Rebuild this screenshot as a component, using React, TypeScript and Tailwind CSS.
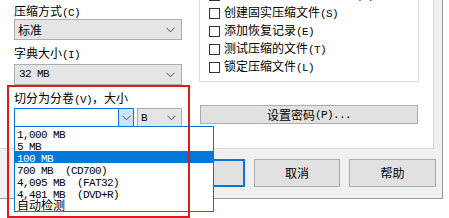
import React from 'react';

const cjk = "font-['Noto_Sans_CJK_SC','Noto_Sans',sans-serif]";

// half-width latin text, SimSun-like 6px advance
function L({ children }: { children: React.ReactNode }) {
  return (
    <span className="font-['Liberation_Mono',monospace] text-[11px] tracking-[-0.6px] whitespace-pre">
      {children}
    </span>
  );
}

function Chevron() {
  return (
    <svg width="9" height="6" viewBox="0 0 9 6" className="shrink-0">
      <polyline points="0.5,0.8 4.5,4.8 8.5,0.8" fill="none" stroke="#4d4d4d" strokeWidth="1" />
    </svg>
  );
}

function Checkbox({ label, mnemonic }: { label: string; mnemonic: string }) {
  return (
    <div className="flex h-[18px] items-center pl-[9px]">
      <div className="h-[11px] w-[11px] border border-[#333] bg-white" />
      <span className="ml-[4px] leading-[14px] whitespace-nowrap">
        {label}
        <L>({mnemonic})</L>
      </span>
    </div>
  );
}

const sizes: { text: string; cn?: boolean }[] = [
  { text: '1,000 MB' },
  { text: '5 MB' },
  { text: '100 MB' },
  { text: '700 MB  (CD700)' },
  { text: '4,095 MB  (FAT32)' },
  { text: '4,481 MB  (DVD+R)' },
  { text: '自动检测', cn: true },
];

export default function App() {
  return (
    <div className={`relative h-[218px] w-[449px] overflow-hidden bg-white text-[12px] text-black ${cjk}`}>
      {/* Dialog */}
      <div className="h-[199px] w-[443px] border-r border-b border-[#9a9a9a] bg-[#f0f0f0]">
        {/* Tab page */}
        <div className="flex h-[149px] w-[434px] border-r border-b border-[#d9d9d9] bg-white pl-[14px]">
          {/* Left column */}
          <div className="flex w-[168px] flex-col">
            <div className="mt-[4px] h-[14px] leading-[14px]">
              压缩方式<L>(C)</L>
            </div>
            <div className="mt-[1px] flex h-[21px] items-center justify-between border border-[#adadad] bg-[#e5e5e5] pr-[6px] pl-[3px]">
              <span className="leading-[14px]">标准</span>
              <Chevron />
            </div>
            <div className="mt-[6px] h-[14px] leading-[14px]">
              字典大小<L>(I)</L>
            </div>
            <div className="mt-[4px] flex h-[21px] items-center justify-between border border-[#adadad] bg-[#e5e5e5] pr-[6px] pl-[4px]">
              <L>32 MB</L>
              <Chevron />
            </div>
            <div className="mt-[6px] h-[14px] leading-[14px]">
              切分为分卷<L>(V)</L>，大小
            </div>
            <div className="mt-[3px] flex h-[20px] items-stretch">
              <div className="flex w-[120px] border border-[#0078d7] bg-white">
                <div className="flex-1" />
                <div className="flex w-[15px] items-center justify-center border-l border-[#0078d7] bg-[#cce4f7]">
                  <Chevron />
                </div>
              </div>
              <div className="ml-[3px] flex w-[45px] items-center justify-between border border-[#adadad] bg-[#e5e5e5] pr-[5px] pl-[3px]">
                <L>B</L>
                <Chevron />
              </div>
            </div>
          </div>

          {/* Right column */}
          <div className="ml-[17px] flex w-[220px] flex-col">
            <div className="mt-[-14px] border-r border-b border-l border-[#dcdcdc] pb-[5px]">
              <Checkbox label="创建自解压格式压缩文件" mnemonic="X" />
              <Checkbox label="创建固实压缩文件" mnemonic="S" />
              <Checkbox label="添加恢复记录" mnemonic="E" />
              <Checkbox label="测试压缩的文件" mnemonic="T" />
              <Checkbox label="锁定压缩文件" mnemonic="L" />
            </div>
            <div className="mt-[23px] ml-[1px] flex h-[19px] w-[218px] items-center justify-center border border-[#adadad] bg-[#e1e1e1] leading-[14px]">
              设置密码<L>(P)...</L>
            </div>
          </div>
        </div>

        {/* Buttons */}
        <div className="mt-[10px] flex justify-end gap-[9px] pr-[6px]">
          <div className="flex h-[28px] w-[86px] items-center justify-center border-2 border-[#0078d7] bg-[#e1e1e1]">
            确定
          </div>
          <div className="flex h-[28px] w-[86px] items-center justify-center border border-[#adadad] bg-[#e1e1e1]">
            取消
          </div>
          <div className="flex h-[28px] w-[87px] items-center justify-center border border-[#adadad] bg-[#e1e1e1]">
            帮助
          </div>
        </div>
      </div>

      {/* Open dropdown list */}
      <div className="absolute top-[126px] left-[14px] w-[200px] border border-[#0078d7] bg-white">
        {sizes.map((s, i) => (
          <div
            key={s.text}
            className={`h-[12px] pl-[2px] leading-[12px] ${i === 2 ? 'bg-[#0078d7] text-white' : ''}`}
          >
            {s.cn ? <span className="leading-[12px]">{s.text}</span> : <L>{s.text}</L>}
          </div>
        ))}
      </div>

      {/* Red annotation box */}
      <div className="pointer-events-none absolute top-[85px] left-[7px] h-[133px] w-[183px] border-2 border-[#e0191e]" />
    </div>
  );
}
